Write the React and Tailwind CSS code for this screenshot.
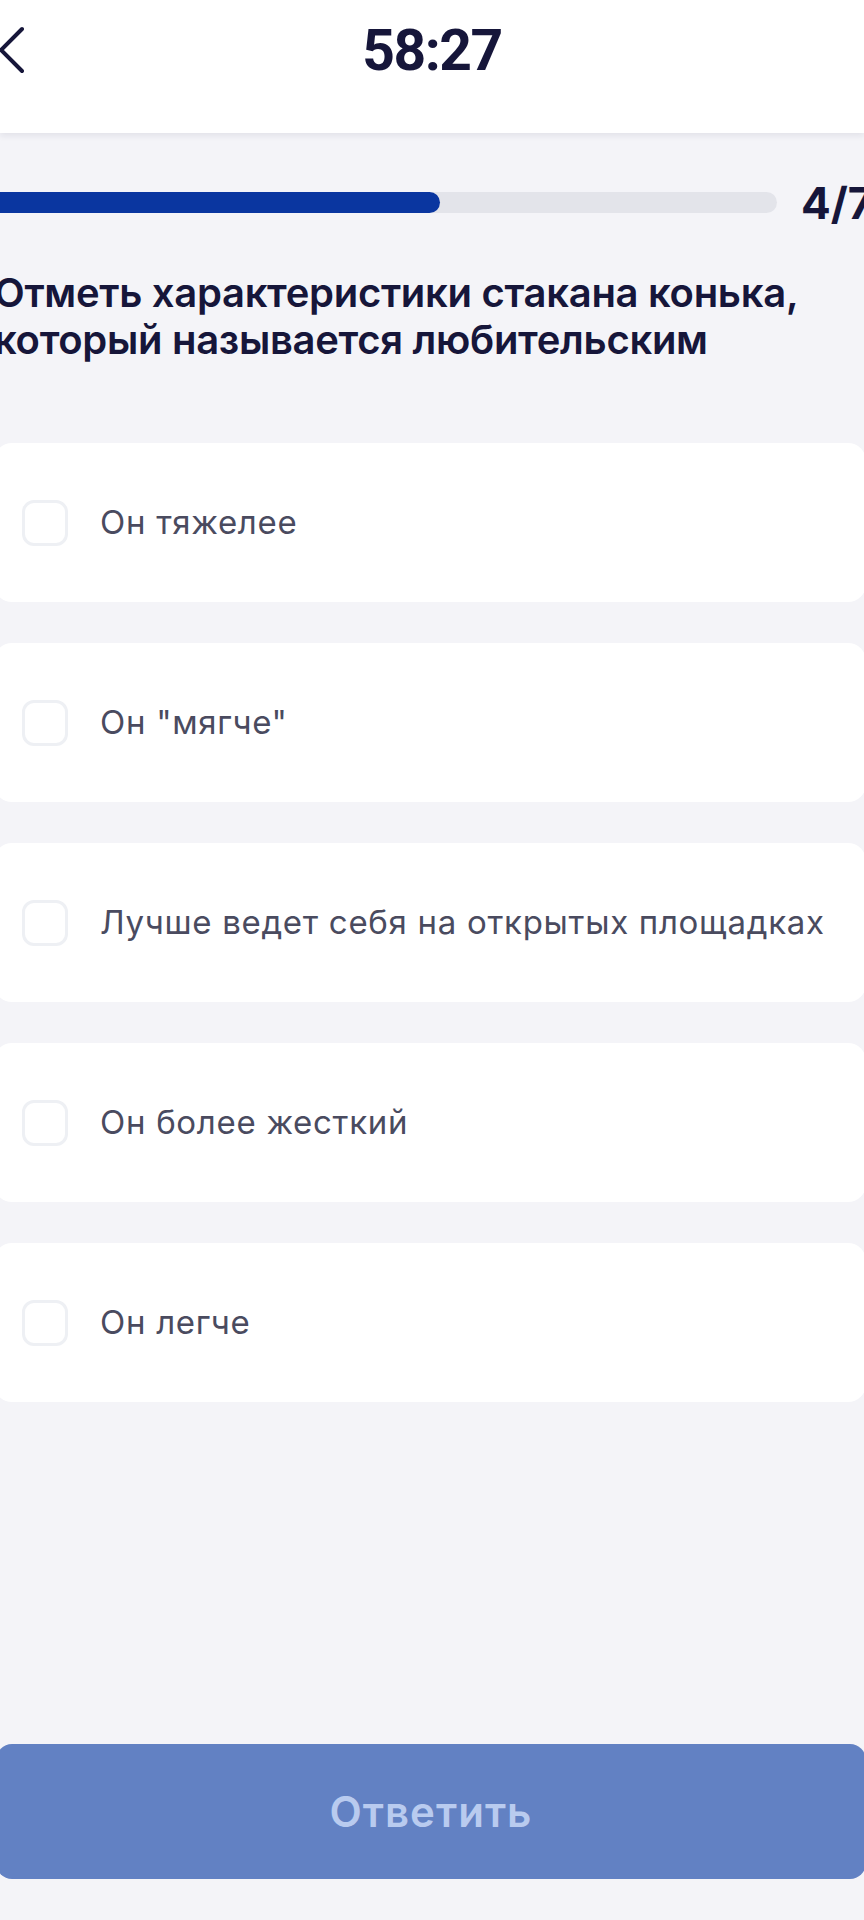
import React, { useState } from 'react';

const options = [
    { id: 1, label: 'Он тяжелее' },
    { id: 2, label: 'Он "мягче"' },
    { id: 3, label: 'Лучше ведет себя на открытых площадках' },
    { id: 4, label: 'Он более жесткий' },
    { id: 5, label: 'Он легче' },
];

const current = 4;
const total = 7;
const progressWidth = 452;

const BackChevron = () => (
    <svg width="30" height="50" viewBox="0 0 30 50" className="-ml-[2px]">
        <path d="M24 4 L3 25 L24 46" fill="none" stroke="#16163a" strokeWidth="4" strokeLinecap="round" strokeLinejoin="round" />
    </svg>
);

const OptionCard = ({ label, checked, onToggle }) => (
    <button
        type="button"
        onClick={onToggle}
        className="-ml-[6px] w-[872px] h-[159px] bg-white rounded-[18px] flex items-center pl-[28px] text-left"
    >
        <span
            className={`w-[46px] h-[46px] rounded-[12px] border-[3px] shrink-0 ${checked ? 'bg-[#0a36a0] border-[#0a36a0]' : 'bg-white border-[#eef0f4]'}`}
        ></span>
        <span className="ml-[32px] text-[33px] font-normal text-[#4a4b5f] tracking-[0.7px] whitespace-nowrap">{label}</span>
    </button>
);

export default function App() {
    const [selected, setSelected] = useState([]);

    const toggle = (id) => {
        setSelected(prev => prev.includes(id) ? prev.filter(x => x !== id) : [...prev, id]);
    };

    return (
        <div className="w-[864px] min-h-[1920px] bg-[#f4f4f8] flex flex-col overflow-hidden" style={{ fontFamily: 'Inter, "Noto Sans", sans-serif' }}>
            {/* top bar with timer */}
            <div className="h-[133px] bg-white shadow-[0_3px_6px_rgba(20,20,60,0.08)] flex items-start pt-[20px] relative z-10">
                <div className="w-[80px] h-[60px] flex items-center">
                    <BackChevron />
                </div>
                <div className="flex-1 h-[60px] flex items-center justify-center text-[57px] font-bold text-[#16163a] tracking-[-1.5px] leading-none" style={{ fontFamily: 'Roboto, sans-serif' }}>
                    58:27
                </div>
                <div className="w-[80px]"></div>
            </div>

            {/* progress */}
            <div className="mt-[59px] flex items-center h-[21px]">
                <div className="-ml-[12px] w-[789px] h-[21px] rounded-full bg-[#e3e4ea] shrink-0">
                    <div className="h-full rounded-full bg-[#0a36a0]" style={{ width: progressWidth }}></div>
                </div>
                <div className="ml-[24px] text-[44px] font-bold text-[#16163a] leading-none whitespace-nowrap">
                    {current}/{total}
                </div>
            </div>

            {/* question */}
            <div className="mt-[56px] -ml-[6px] text-[40px] leading-[47px] font-semibold text-[#16163a] tracking-[-0.3px]">
                Отметь характеристики стакана конька,<br />
                который называется любительским
            </div>

            {/* answers */}
            <div className="mt-[80px] flex flex-col gap-[41px]">
                {options.map(o => (
                    <OptionCard key={o.id} label={o.label} checked={selected.includes(o.id)} onToggle={() => toggle(o.id)} />
                ))}
            </div>

            <div className="mt-auto mb-[41px]">
                <button
                    type="button"
                    className="-ml-[4px] w-[870px] h-[135px] rounded-[16px] bg-[#6281c3] text-[#b9cbef] text-[42px] font-semibold tracking-[1px] flex items-center justify-center"
                >
                    Ответить
                </button>
            </div>
        </div>
    );
}
